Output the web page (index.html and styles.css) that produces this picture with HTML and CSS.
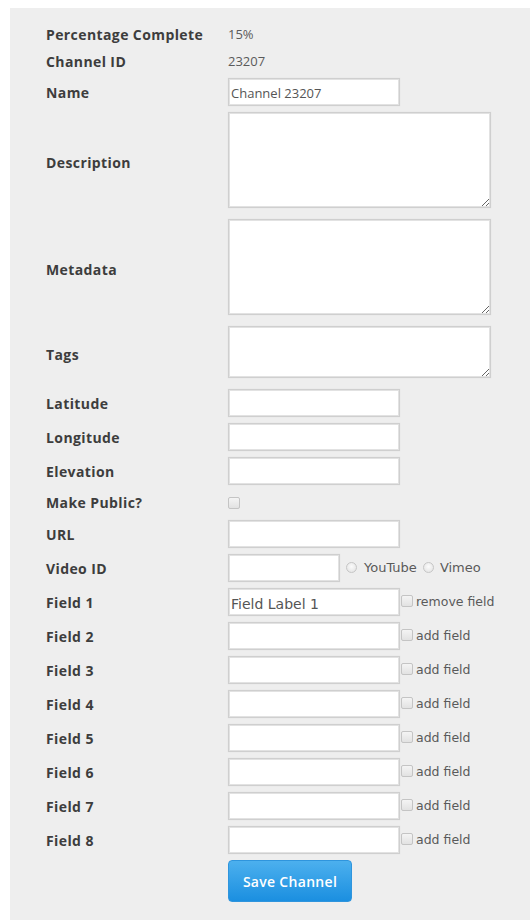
FILE: index.html
```html
<!DOCTYPE html>
<html lang="en">
<head>
<meta charset="utf-8">
<title>Channel Settings</title>
<link rel="stylesheet" href="styles.css">
</head>
<body>
<div class="panel">
  <form class="channel-form">
    <div class="label">Percentage Complete</div>
    <div class="value">15%</div>

    <div class="label">Channel ID</div>
    <div class="value">23207</div>

    <label class="label" for="name">Name</label>
    <div><input class="text" id="name" type="text" value="Channel 23207"></div>

    <label class="label" for="desc">Description</label>
    <div><textarea class="area area-lg" id="desc"></textarea></div>

    <label class="label" for="meta">Metadata</label>
    <div><textarea class="area area-md" id="meta"></textarea></div>

    <label class="label" for="tags">Tags</label>
    <div><textarea class="area area-sm" id="tags"></textarea></div>

    <label class="label" for="lat">Latitude</label>
    <div><input class="text" id="lat" type="text"></div>

    <label class="label" for="lon">Longitude</label>
    <div><input class="text" id="lon" type="text"></div>

    <label class="label" for="elev">Elevation</label>
    <div><input class="text" id="elev" type="text"></div>

    <label class="label label-short" for="public">Make Public?</label>
    <div class="check-row"><input class="check" id="public" type="checkbox"></div>

    <label class="label" for="url">URL</label>
    <div><input class="text" id="url" type="text"></div>

    <label class="label" for="video">Video ID</label>
    <div class="inline">
      <input class="text text-short" id="video" type="text">
      <input class="radio" type="radio" name="vtype"><span class="opt opt-video">YouTube</span>
      <input class="radio" type="radio" name="vtype"><span class="opt opt-video">Vimeo</span>
    </div>

    <label class="label" for="f1">Field 1</label>
    <div class="inline">
      <input class="text field-text" id="f1" type="text" value="Field Label 1"><input class="check" type="checkbox"><span class="opt">remove field</span>
    </div>

    <label class="label" for="f2">Field 2</label>
    <div class="inline"><input class="text field-text" id="f2" type="text"><input class="check" type="checkbox"><span class="opt">add field</span></div>

    <label class="label" for="f3">Field 3</label>
    <div class="inline"><input class="text field-text" id="f3" type="text"><input class="check" type="checkbox"><span class="opt">add field</span></div>

    <label class="label" for="f4">Field 4</label>
    <div class="inline"><input class="text field-text" id="f4" type="text"><input class="check" type="checkbox"><span class="opt">add field</span></div>

    <label class="label" for="f5">Field 5</label>
    <div class="inline"><input class="text field-text" id="f5" type="text"><input class="check" type="checkbox"><span class="opt">add field</span></div>

    <label class="label" for="f6">Field 6</label>
    <div class="inline"><input class="text field-text" id="f6" type="text"><input class="check" type="checkbox"><span class="opt">add field</span></div>

    <label class="label" for="f7">Field 7</label>
    <div class="inline"><input class="text field-text" id="f7" type="text"><input class="check" type="checkbox"><span class="opt">add field</span></div>

    <label class="label" for="f8">Field 8</label>
    <div class="inline"><input class="text field-text" id="f8" type="text"><input class="check" type="checkbox"><span class="opt">add field</span></div>

    <div></div>
    <div><button class="save" type="button">Save Channel</button></div>
  </form>
</div>
</body>
</html>
```

FILE: styles.css
```css
html, body {
  margin: 0;
  padding: 0;
  background: #ffffff;
}

body {
  font-family: "Open Sans", "DejaVu Sans", sans-serif;
  color: #444;
}

.panel {
  margin: 8px 2px 0 10px;
  min-height: 912px;
  background: #eeeeee;
  box-sizing: border-box;
  padding: 16px 0 0 36px;
}

.channel-form {
  display: grid;
  grid-template-columns: 182px 1fr;
  row-gap: 6px;
  align-items: center;
}

.label {
  font-size: 14px;
  font-weight: 700;
  letter-spacing: 0.4px;
  color: #3d3d3d;
  line-height: 21px;
}

.label-short {
  line-height: 23px;
}

.value {
  font-size: 13px;
  color: #5a5a5a;
  line-height: 21px;
}

.text {
  box-sizing: border-box;
  width: 172px;
  height: 28px;
  margin: 0;
  padding: 2px 2px 0;
  border: 1px solid #cfcfcf;
  box-shadow: inset 0 0 0 1px #e2e2e2, 0 0 1px #d8d8d8;
  background: #fff;
  font-family: inherit;
  font-size: 13px;
  color: #555;
  outline: none;
  display: block;
}

/* field label inputs use the plain system-style face */
.field-text {
  font-family: "DejaVu Sans", sans-serif;
  font-size: 14px;
  padding-top: 3px;
}

.text-short {
  width: 112px;
}

.area {
  box-sizing: border-box;
  width: 263px;
  margin: 0 0 5px;
  padding: 2px;
  border: 1px solid #cfcfcf;
  box-shadow: inset 0 0 0 1px #e2e2e2, 0 0 1px #d8d8d8;
  background: #fff;
  display: block;
  resize: both;
  font-family: inherit;
}

.area-lg {
  height: 96px;
}

.area-md {
  height: 96px;
}

.area-sm {
  height: 52px;
}

.check-row {
  height: 23px;
  display: flex;
  align-items: center;
}

.inline {
  display: flex;
  align-items: center;
  height: 28px;
}

.check {
  appearance: none;
  -webkit-appearance: none;
  box-sizing: border-box;
  width: 12px;
  height: 12px;
  margin: 0 3px 0 1px;
  border: 1px solid #c4c4c4;
  border-radius: 2px;
  background: linear-gradient(#f4f4f4, #e2e2e2);
  flex: none;
}

.check-row .check {
  margin-left: 0;
}

.inline .check {
  margin-top: -3px;
}

.radio {
  appearance: none;
  -webkit-appearance: none;
  box-sizing: border-box;
  width: 11px;
  height: 11px;
  margin: -2px 7px 0 6px;
  border: 1px solid #c6c6c6;
  border-radius: 50%;
  background: radial-gradient(circle at 50% 40%, #fbfbfb, #e0e0e0);
  flex: none;
}

.radio + .opt + .radio {
  margin-left: 6px;
  margin-right: 6px;
}

.opt {
  font-family: "DejaVu Sans", sans-serif;
  font-size: 12.5px;
  color: #5a5a5a;
  line-height: 16px;
}

.opt-video {
  font-size: 13px;
}

.save {
  margin: 0;
  width: 124px;
  height: 42px;
  border: 1px solid #2f95dd;
  border-radius: 4px;
  background: linear-gradient(#4cb0ee, #1b8fe0);
  color: #ffffff;
  font-family: inherit;
  font-size: 14px;
  font-weight: 600;
  letter-spacing: 0.3px;
  cursor: pointer;
  display: block;
}
```
